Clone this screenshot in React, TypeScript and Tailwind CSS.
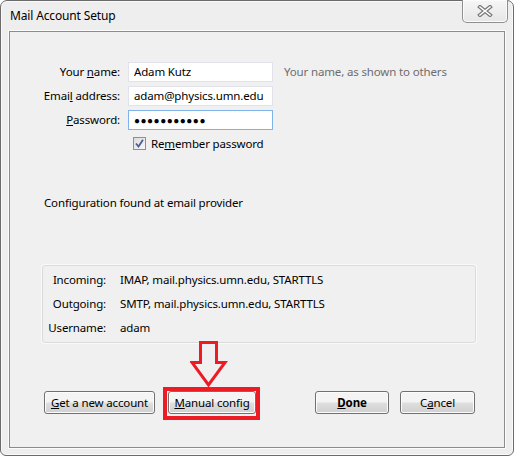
import React from 'react';

function Btn({ children, bold, className = '' }: { children: React.ReactNode; bold?: boolean; className?: string }) {
  return (
    <div
      className={`h-[23px] flex items-center justify-center rounded-[3px] border border-[#707070] bg-gradient-to-b from-[#f4f4f4] from-45% via-[#dedede] via-55% to-[#d0d0d0] shadow-[inset_0_0_0_1px_#fcfcfc] text-black ${bold ? 'font-bold' : ''} ${className}`}
    >
      {children}
    </div>
  );
}

function Field({ children, focused }: { children: React.ReactNode; focused?: boolean }) {
  return (
    <div
      className={`h-[20px] w-[145px] bg-white border flex items-center px-[5px] leading-none text-black ${
        focused ? 'border-[#7eb4ea]' : 'border-[#e2e3ea]'
      }`}
    >
      {children}
    </div>
  );
}

export default function App() {
  return (
    <div className="w-[521px] h-[458px] bg-white font-['Noto_Sans',sans-serif] text-[11.5px] tracking-[-0.15px] text-black">
      {/* window frame */}
      <div className="w-[514px] h-[456px] rounded-t-[7px] rounded-b-[6px] border border-[#6b6b6b] bg-[#eeeeee] flex flex-col px-[8px] pb-[7px] shadow-[inset_0_0_0_1px_#fafafa]">
        {/* title bar */}
        <div className="h-[30px] flex justify-between shrink-0">
          <div className="pt-[7px] pl-[1px] leading-[16px] text-[12px]">Mail Account Setup</div>
          <div className="w-[46px] h-[23px] -mt-px mr-[-3px] rounded-b-[5px] border border-t-0 border-[#8f8f8f] bg-gradient-to-b from-[#f6f6f6] to-[#e6e6e6] flex items-center justify-center shadow-[inset_0_0_0_1px_#fbfbfb]">
            <svg width="16" height="12" viewBox="0 0 16 12">
              <path d="M3 2 L13 10 M13 2 L3 10" stroke="#7a7a7a" strokeWidth="4" strokeLinecap="square" />
              <path d="M3 2 L13 10 M13 2 L3 10" stroke="#ffffff" strokeWidth="1.6" strokeLinecap="square" />
            </svg>
          </div>
        </div>

        {/* content panel */}
        <div className="flex-1 border border-[#8c8c8c] bg-[#f0f0f0] shadow-[0_0_0_1px_#fbfbfb] flex flex-col">
          {/* form */}
          <div className="mt-[30px] grid grid-cols-[110px_145px_auto] gap-x-[8px] gap-y-[4px] items-center">
            <div className="text-right">
              Your <u>n</u>ame:
            </div>
            <Field>Adam Kutz</Field>
            <div className="pl-[3px] text-[#6d6d6d]">Your name, as shown to others</div>

            <div className="text-right">
              Emai<u>l</u> address:
            </div>
            <Field>adam@physics.umn.edu</Field>
            <div />

            <div className="text-right">
              <u>P</u>assword:
            </div>
            <Field focused>
              <span className="text-[10px] tracking-[0.5px]">●●●●●●●●●●●</span>
            </Field>
            <div />
          </div>

          {/* remember */}
          <div className="mt-[7px] ml-[123px] flex items-center gap-[5px] h-[13px]">
            <div className="w-[13px] h-[13px] border border-[#8e8f8f] bg-gradient-to-br from-[#dcdcdc] to-[#f7f7f7] flex items-center justify-center">
              <svg width="9" height="9" viewBox="0 0 9 9">
                <path d="M1 4.5 L3.5 7.5 L8 0.8" stroke="#4a5f97" strokeWidth="1.8" fill="none" />
              </svg>
            </div>
            <span>
              Re<u>m</u>ember password
            </span>
          </div>

          <div className="mt-[45px] ml-[34px] leading-[16px]">Configuration found at email provider</div>

          {/* info box */}
          <div className="mt-[54px] ml-[32px] w-[434px] h-[78px] rounded-[3px] border border-[#dadada] bg-[#f0f0f0] shadow-[0_0_0_1px_#fafafa] pt-[5px] grid grid-cols-[63px_auto] gap-x-[14px] gap-y-[6px] content-start leading-[18px]">
            <div className="text-right">Incoming:</div>
            <div>IMAP, mail.physics.umn.edu, STARTTLS</div>
            <div className="text-right">Outgoing:</div>
            <div>SMTP, mail.physics.umn.edu, STARTTLS</div>
            <div className="text-right">Username:</div>
            <div>adam</div>
          </div>

          {/* buttons */}
          <div className="mt-[48px] ml-[34px] flex items-center">
            <Btn className="w-[111px]">
              <u>G</u>et a new account
            </Btn>
            <div className="relative ml-[13px]">
              <Btn className="w-[88px]">
                <u>M</u>anual config
              </Btn>
              {/* annotation overlay */}
              <div className="absolute left-[-5px] top-[-4px] w-[97px] h-[33px] border-[4px] border-[#ed1c24]" />
              <svg
                className="absolute left-[22px] top-[-50px]"
                width="40"
                height="48"
                viewBox="0 0 40 48"
              >
                <path
                  d="M10.5 1.5 H26.5 V21.5 H35 L18.5 44 L2 21.5 H10.5 Z"
                  stroke="#ed1c24"
                  strokeWidth="3"
                  fill="none"
                />
              </svg>
            </div>
            <Btn bold className="w-[74px] ml-[59px]">
              <u>D</u>one
            </Btn>
            <Btn className="w-[75px] ml-[11px]">
              C<u>a</u>ncel
            </Btn>
          </div>
        </div>
      </div>
    </div>
  );
}
